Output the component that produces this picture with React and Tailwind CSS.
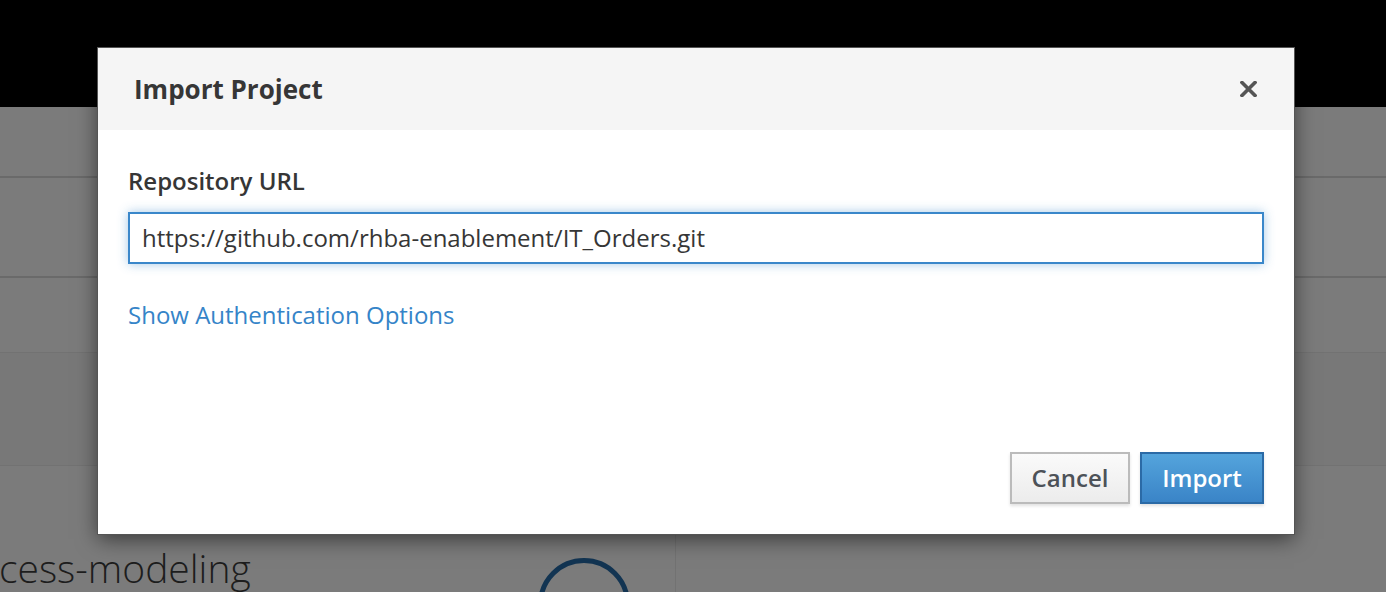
import React from "react";

export default function App() {
  const font = { fontFamily: '"Open Sans", "Noto Sans", sans-serif' };
  return (
    <div className="relative w-[1386px] h-[592px] overflow-hidden bg-[#7b7b7b]" style={font}>
      {/* background page under overlay */}
      <div className="flex flex-col h-full">
        <div className="h-[107px] bg-black shrink-0" />
        <div className="h-[69px] shrink-0" />
        <div className="h-[2px] bg-[#6a6a6a] shrink-0" />
        <div className="h-[98px] shrink-0" />
        <div className="h-[2px] bg-[#6a6a6a] shrink-0" />
        <div className="h-[74px] shrink-0" />
        <div className="h-px bg-[#727272] shrink-0" />
        <div className="h-[112px] bg-[#787878] shrink-0" />
        <div className="h-px bg-[#727272] shrink-0" />
        <div className="flex flex-1">
          <div className="w-[676px] relative border-r border-[#727272]">
            <div className="absolute left-[-1px] top-[82px] text-[39px] font-light leading-none text-[#1d1d1d] whitespace-nowrap">
              cess-modeling
            </div>
            <div className="absolute left-[538px] top-[92px] w-[92px] h-[92px] rounded-full border-[5px] border-[#123452]" />
          </div>
          <div className="flex-1" />
        </div>
      </div>

      {/* modal */}
      <div className="absolute left-[98px] top-[48px] w-[1196px] h-[486px] bg-white flex flex-col shadow-[0_5px_20px_rgba(0,0,0,0.55)] outline outline-1 outline-[#555]">
        <div className="h-[82px] bg-[#f5f5f5] flex items-center justify-between pl-[36px] pr-[37px] shrink-0">
          <div className="text-[26px] font-bold text-[#363636] leading-none">Import Project</div>
          <svg width="17" height="16" viewBox="0 0 17 16">
            <path d="M2 1.5 L15 14.5 M15 1.5 L2 14.5" stroke="#555" strokeWidth="3.6" strokeLinecap="square" />
          </svg>
        </div>
        <div className="flex flex-col flex-1 px-[30px] pt-[35px] pb-[30px]">
          <div className="text-[24px] font-semibold text-[#363636] leading-[32px]">Repository URL</div>
          <div className="mt-[15px] h-[52px] border-2 border-[#3a87ca] shadow-[0_0_10px_rgba(58,135,202,0.45)] flex items-center pl-[12px] text-[24px] text-[#363636]">
            https://github.com/rhba-enablement/IT_Orders.git
          </div>
          <div className="mt-[35px] text-[24px] text-[#3584c8] leading-[32px]">Show Authentication Options</div>
          <div className="flex-1" />
          <div className="flex justify-end gap-[10px]">
            <div className="w-[120px] h-[52px] border-2 border-[#bbbbbb] bg-gradient-to-b from-[#fafafa] to-[#ececec] flex items-center justify-center text-[24px] font-semibold text-[#4d5258] shadow-[0_2px_3px_rgba(0,0,0,0.12)]">
              Cancel
            </div>
            <div className="w-[124px] h-[52px] border-2 border-[#2b6aa6] bg-gradient-to-b from-[#54a4dc] to-[#3a84c7] flex items-center justify-center text-[24px] font-semibold text-white shadow-[0_2px_3px_rgba(0,0,0,0.12)]">
              Import
            </div>
          </div>
        </div>
      </div>
    </div>
  );
}
